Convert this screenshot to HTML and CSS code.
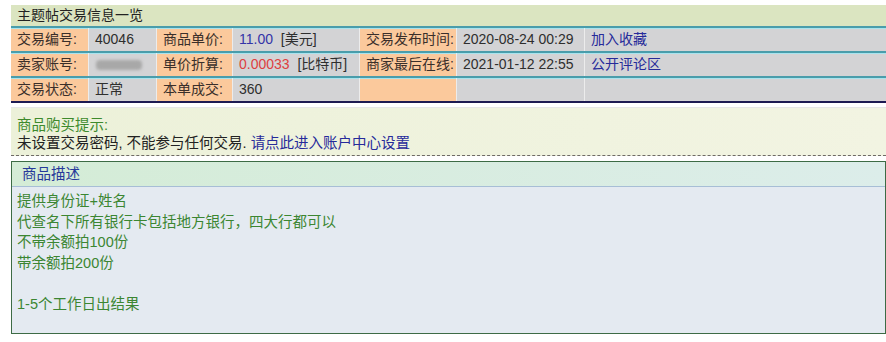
FILE: index.html
```html
<!DOCTYPE html>
<html lang="zh-CN">
<head>
<meta charset="utf-8">
<title>主题帖交易信息一览</title>
<link rel="stylesheet" href="styles.css">
</head>
<body>
<div class="page">
  <div class="title">主题帖交易信息一览</div>
  <div class="info">
    <div class="row">
      <div class="cell label">交易编号:</div>
      <div class="cell val">40046</div>
      <div class="cell label">商品单价:</div>
      <div class="cell val"><span class="price">11.00</span>&nbsp;&nbsp;[美元]</div>
      <div class="cell label">交易发布时间:</div>
      <div class="cell val">2020-08-24 00:29</div>
      <div class="cell val"><a class="link">加入收藏</a></div>
    </div>
    <div class="row">
      <div class="cell label">卖家账号:</div>
      <div class="cell val"><span class="blur"></span></div>
      <div class="cell label">单价折算:</div>
      <div class="cell val"><span class="btc">0.00033</span>&nbsp;&nbsp;[比特币]</div>
      <div class="cell label">商家最后在线:</div>
      <div class="cell val">2021-01-12 22:55</div>
      <div class="cell val"><a class="link">公开评论区</a></div>
    </div>
    <div class="row">
      <div class="cell label">交易状态:</div>
      <div class="cell val">正常</div>
      <div class="cell label">本单成交:</div>
      <div class="cell val">360</div>
      <div class="cell label"></div>
      <div class="cell val"></div>
      <div class="cell val"></div>
    </div>
  </div>
  <div class="tip">
    <div class="tip-title">商品购买提示:</div>
    <div class="tip-text">未设置交易密码, 不能参与任何交易. <a class="link">请点此进入账户中心设置</a></div>
  </div>
  <div class="desc">
    <div class="desc-head">商品描述</div>
    <div class="desc-body">
      <div>提供身份证+姓名</div>
      <div>代查名下所有银行卡包括地方银行，四大行都可以</div>
      <div>不带余额拍100份</div>
      <div>带余额拍200份</div>
      <div>&nbsp;</div>
      <div>1-5个工作日出结果</div>
    </div>
  </div>
</div>
</body>
</html>
```
FILE: styles.css
```css
html, body {
  margin: 0;
  padding: 0;
  background: #ffffff;
  overflow: hidden;
}
body {
  font-family: "Liberation Sans", "Noto Sans CJK SC", sans-serif;
  font-size: 14px;
  color: #2a2a2a;
}
.page {
  padding: 5px 0 0 11px;
  width: 875px;
}
.title {
  height: 21px;
  line-height: 21px;
  padding-left: 6px;
  background: #dbe5c1;
  color: #222;
}
.info {
  border-bottom: 2px solid #1d1a52;
}
.row {
  display: grid;
  grid-template-columns: 77px 68px 76px 127px 97px 128px 1fr;
  border-top: 2px solid #4a9dab;
}
.cell {
  height: 23px;
  line-height: 23px;
  padding-left: 6px;
  box-shadow: inset 0 1px 0 #a8e4ee;
  border-left: 1px solid #ececec;
  white-space: nowrap;
  overflow: hidden;
}
.cell:first-child {
  border-left: none;
}
.label {
  background: #fbc99c;
  color: #3a2f2a;
}
.val {
  background: #d3d3d5;
  color: #2e2e2e;
}
.price {
  color: #3434a8;
}
.btc {
  color: #de4040;
}
.link {
  color: #262a9a;
  text-decoration: none;
}
.blur {
  display: inline-block;
  width: 46px;
  height: 10px;
  margin-left: 1px;
  vertical-align: middle;
  background: #a8a8a8;
  border-radius: 4px;
  filter: blur(1.5px);
}
.tip {
  margin-top: 4px;
  padding: 8px 0 3px 6px;
  background: linear-gradient(to right, #ecf1d9, #f2f4e2);
  border-top: 1px solid #e6e6e6;
  border-bottom: 1px dashed #6e6a66;
  line-height: 18px;
  font-size: 14.5px;
}
.tip-title {
  color: #3d8a2c;
}
.tip-text {
  color: #222;
}
.desc {
  margin-top: 5px;
  border: 1px solid #3d6b45;
  background: #e4eaf1;
  height: 171px;
}
.desc-head {
  height: 24px;
  line-height: 24px;
  padding-left: 10px;
  background: linear-gradient(to right, #d4ecd6, #dcedea);
  border-bottom: 1px solid #a7bed6;
  color: #27399a;
  font-size: 14.5px;
}
.desc-body {
  padding: 4px 0 0 5px;
  line-height: 20.6px;
  color: #3b8632;
  font-size: 14.5px;
}
```
